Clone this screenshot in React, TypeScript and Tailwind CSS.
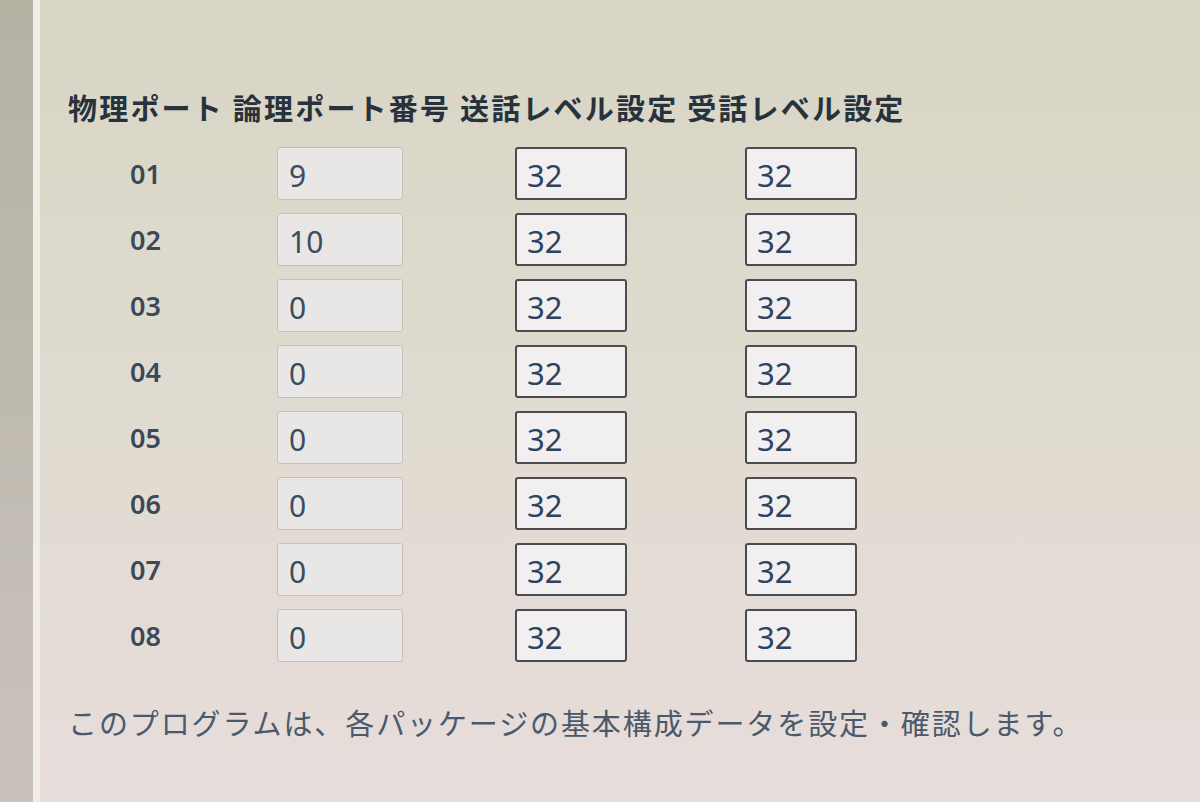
import React from "react";

const rows = [
  { port: "01", logical: "9", send: "32", recv: "32" },
  { port: "02", logical: "10", send: "32", recv: "32" },
  { port: "03", logical: "0", send: "32", recv: "32" },
  { port: "04", logical: "0", send: "32", recv: "32" },
  { port: "05", logical: "0", send: "32", recv: "32" },
  { port: "06", logical: "0", send: "32", recv: "32" },
  { port: "07", logical: "0", send: "32", recv: "32" },
  { port: "08", logical: "0", send: "32", recv: "32" },
];

export default function App() {
  return (
    <div className="flex h-[802px] w-[1200px] overflow-hidden bg-gradient-to-b from-[#d8d5c5] via-[#e0dbd0] to-[#e7dcda]">
      <div className="h-full w-[33px] bg-gradient-to-b from-[#b5b2a4] to-[#c9c2bc]" />
      <div className="h-full w-[7px] bg-[#efede6]" />
      <div className="flex flex-1 flex-col pl-[28px] pt-[89px]">
        <div className="h-[36px] text-[29px] leading-[36px] font-bold tracking-[2.2px] text-[#28323c] [font-family:'Noto_Sans_CJK_JP',sans-serif] whitespace-nowrap">
          物理ポート 論理ポート番号 送話レベル設定 受話レベル設定
        </div>
        <div className="mt-[22px] ml-[60px] grid grid-cols-[149px_238px_230px_auto] gap-y-[13px] [font-family:'Noto_Sans',sans-serif]">
          {rows.map((r) => (
            <React.Fragment key={r.port}>
              <div className="flex h-[53px] items-center pl-[2px] pt-[2px] text-[27px] font-semibold text-[#3a4858]">
                {r.port}
              </div>
              <div className="flex h-[53px] w-[126px] items-center rounded-[3px] border border-[#c4c0bc] bg-[#e9e7e5] pl-[11px] pt-[3px] text-[30px] text-[#3c4c60]">
                {r.logical}
              </div>
              <div className="flex h-[53px] w-[112px] items-center rounded-[3px] border-2 border-[#4a4c50] bg-[#f1efef] pl-[10px] pt-[3px] text-[31px] text-[#2c4464]">
                {r.send}
              </div>
              <div className="flex h-[53px] w-[112px] items-center rounded-[3px] border-2 border-[#4a4c50] bg-[#f1efef] pl-[10px] pt-[3px] text-[31px] text-[#2c4464]">
                {r.recv}
              </div>
            </React.Fragment>
          ))}
        </div>
        <div className="mt-[42px] h-[36px] text-[29px] leading-[36px] tracking-[1.9px] text-[#4a5a6c] [font-family:'Noto_Sans_CJK_JP',sans-serif] whitespace-nowrap">
          このプログラムは、各パッケージの基本構成データを設定・確認します。
        </div>
      </div>
    </div>
  );
}
